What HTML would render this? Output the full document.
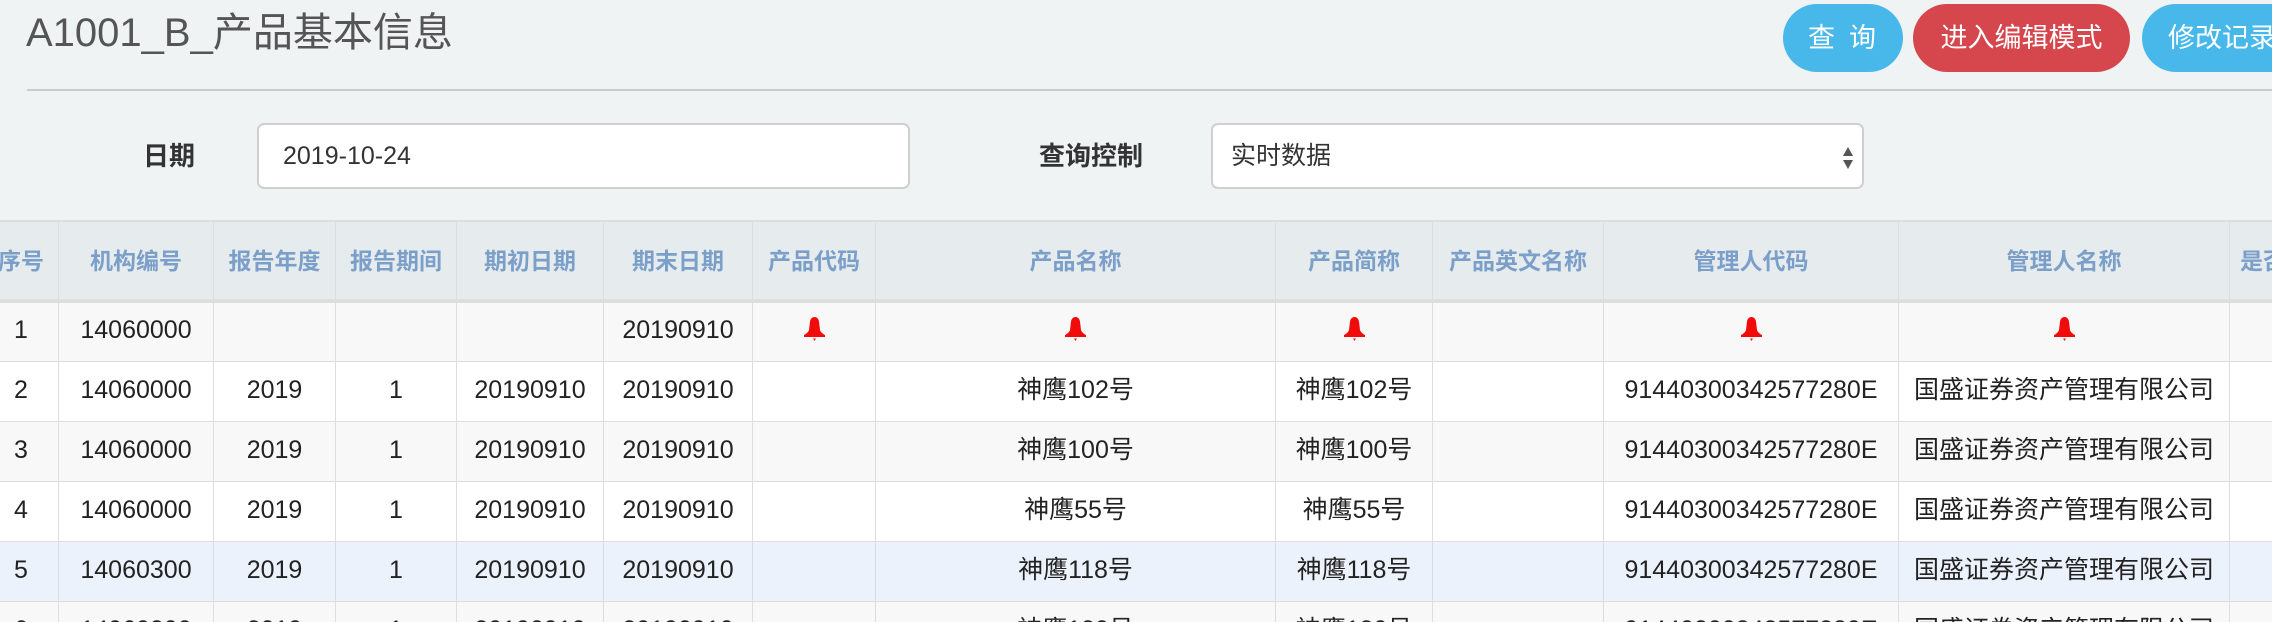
<!DOCTYPE html>
<html><head><meta charset="utf-8"><style>
*{box-sizing:border-box;margin:0;padding:0}
html,body{width:2272px;height:622px;overflow:hidden}
body{background:#eff3f4;font-family:"Liberation Sans","Noto Sans CJK SC",sans-serif;position:relative}
.title{position:absolute;left:26px;top:9px;font-size:40px;color:#555;line-height:48px}
.hr{position:absolute;left:27px;right:0;top:89px;height:2px;background:#ccc}
.btn{position:absolute;top:4px;height:68px;border-radius:34px;color:#fff;font-size:27px;line-height:68px;text-align:center}
.lbl{position:absolute;top:138px;font-size:26px;font-weight:bold;color:#333;line-height:36px}
.inp{position:absolute;top:123px;height:66px;background:#fff;border:2px solid #cfcfcf;border-radius:7px;font-size:25px;color:#333;line-height:62px;padding-left:24px}
table{position:absolute;left:-17px;top:220px;border-collapse:collapse;table-layout:fixed;width:2439px}
th{height:80px;background:#e6ecee;color:#7b9fc9;font-size:23px;font-weight:bold;border:1px solid #ddd;border-top:2px solid #ddd;border-bottom:4px solid #ddd;text-align:center;padding-bottom:4px}
td{height:60px;border:1px solid #ddd;border-top:0;font-size:25px;color:#222;text-align:center;vertical-align:middle;line-height:30px;padding-bottom:3px}
tr.o td{background:#f8f8f8}
tr.e td{background:#fff}
tr.s td{background:#ecf2fc}
.bell{display:inline-block;width:23px;height:26px;vertical-align:middle;margin-top:-6px}
</style></head><body>
<div class="title">A1001_B_产品基本信息</div>
<div class="btn" style="left:1783px;width:120px;background:#48b8ea;letter-spacing:14px;padding-left:12px">查询</div>
<div class="btn" style="left:1913px;width:217px;background:#d6464d">进入编辑模式</div>
<div class="btn" style="left:2142px;width:180px;background:#48b8ea;text-align:left;padding-left:26px">修改记录</div>
<div class="hr"></div>
<div class="lbl" style="left:143px">日期</div>
<div class="inp" style="left:257px;width:653px">2019-10-24</div>
<div class="lbl" style="left:1039px">查询控制</div>
<div class="inp" style="left:1211px;width:653px;padding-left:18px">实时数据
<svg style="position:absolute;right:8px;top:20px" width="12" height="26" viewBox="0 0 12 26"><path d="M6 2 L11 11 H1Z M6 24 L11 15 H1Z" fill="#555"/></svg></div>
<table>
<colgroup><col style="width:75px"><col style="width:155px"><col style="width:122px"><col style="width:121px"><col style="width:147px"><col style="width:149px"><col style="width:123px"><col style="width:400px"><col style="width:157px"><col style="width:171px"><col style="width:295px"><col style="width:331px"><col style="width:193px"></colgroup>
<tr><th>序号</th><th>机构编号</th><th>报告年度</th><th>报告期间</th><th>期初日期</th><th>期末日期</th><th>产品代码</th><th>产品名称</th><th>产品简称</th><th>产品英文名称</th><th>管理人代码</th><th>管理人名称</th><th style="text-align:left;padding-left:10px">是否</th></tr>
<tr class="o"><td>1</td><td>14060000</td><td></td><td></td><td></td><td>20190910</td>
<td><svg class="bell" viewBox="0 0 23 26"><path d="M11.5 1C9.5 1 7.5 2.5 7 5.5L6 14C5.5 16 3 18 1 19V21H22V19C20 18 17.5 16 17 14L16 5.5C15.5 2.5 13.5 1 11.5 1Z M10 22.5h3L11.5 25Z" fill="#f20b0b"/></svg></td>
<td><svg class="bell" viewBox="0 0 23 26"><path d="M11.5 1C9.5 1 7.5 2.5 7 5.5L6 14C5.5 16 3 18 1 19V21H22V19C20 18 17.5 16 17 14L16 5.5C15.5 2.5 13.5 1 11.5 1Z M10 22.5h3L11.5 25Z" fill="#f20b0b"/></svg></td>
<td><svg class="bell" viewBox="0 0 23 26"><path d="M11.5 1C9.5 1 7.5 2.5 7 5.5L6 14C5.5 16 3 18 1 19V21H22V19C20 18 17.5 16 17 14L16 5.5C15.5 2.5 13.5 1 11.5 1Z M10 22.5h3L11.5 25Z" fill="#f20b0b"/></svg></td>
<td></td>
<td><svg class="bell" viewBox="0 0 23 26"><path d="M11.5 1C9.5 1 7.5 2.5 7 5.5L6 14C5.5 16 3 18 1 19V21H22V19C20 18 17.5 16 17 14L16 5.5C15.5 2.5 13.5 1 11.5 1Z M10 22.5h3L11.5 25Z" fill="#f20b0b"/></svg></td>
<td><svg class="bell" viewBox="0 0 23 26"><path d="M11.5 1C9.5 1 7.5 2.5 7 5.5L6 14C5.5 16 3 18 1 19V21H22V19C20 18 17.5 16 17 14L16 5.5C15.5 2.5 13.5 1 11.5 1Z M10 22.5h3L11.5 25Z" fill="#f20b0b"/></svg></td><td></td></tr>
<tr class="e"><td>2</td><td>14060000</td><td>2019</td><td>1</td><td>20190910</td><td>20190910</td><td></td><td>神鹰102号</td><td>神鹰102号</td><td></td><td>91440300342577280E</td><td>国盛证券资产管理有限公司</td><td></td></tr>
<tr class="o"><td>3</td><td>14060000</td><td>2019</td><td>1</td><td>20190910</td><td>20190910</td><td></td><td>神鹰100号</td><td>神鹰100号</td><td></td><td>91440300342577280E</td><td>国盛证券资产管理有限公司</td><td></td></tr>
<tr class="e"><td>4</td><td>14060000</td><td>2019</td><td>1</td><td>20190910</td><td>20190910</td><td></td><td>神鹰55号</td><td>神鹰55号</td><td></td><td>91440300342577280E</td><td>国盛证券资产管理有限公司</td><td></td></tr>
<tr class="s"><td>5</td><td>14060300</td><td>2019</td><td>1</td><td>20190910</td><td>20190910</td><td></td><td>神鹰118号</td><td>神鹰118号</td><td></td><td>91440300342577280E</td><td>国盛证券资产管理有限公司</td><td></td></tr>
<tr class="o"><td>6</td><td>14060300</td><td>2019</td><td>1</td><td>20190910</td><td>20190910</td><td></td><td>神鹰120号</td><td>神鹰120号</td><td></td><td>91440300342577280E</td><td>国盛证券资产管理有限公司</td><td></td></tr>
</table>
</body></html>
